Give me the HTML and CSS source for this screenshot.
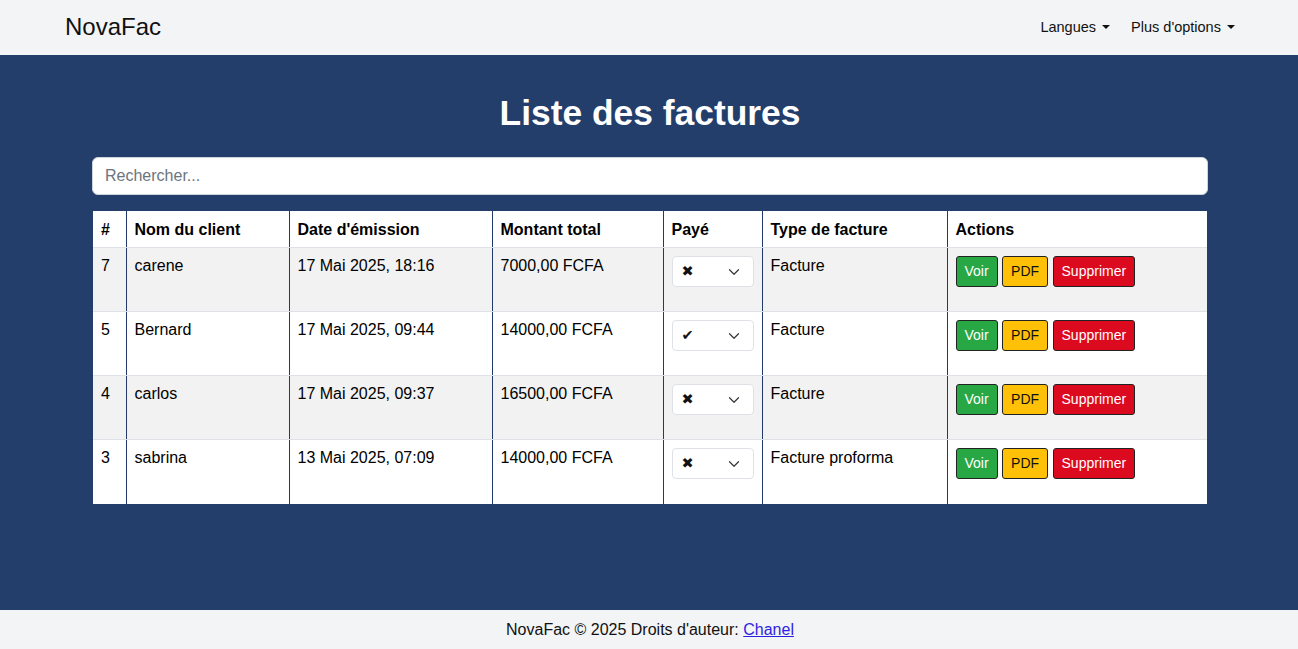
FILE: index.html
```html
<!DOCTYPE html>
<html lang="fr">
<head>
<meta charset="utf-8">
<title>NovaFac - Liste des factures</title>
<link rel="stylesheet" href="styles.css">
</head>
<body>
<nav class="navbar">
  <div class="nav-inner">
    <a class="brand" href="#">NovaFac</a>
    <ul class="nav-links">
      <li><a class="nav-link dropdown-toggle" href="#">Langues</a></li>
      <li><a class="nav-link dropdown-toggle" href="#">Plus d'options</a></li>
    </ul>
  </div>
</nav>
<main class="main">
  <div class="container">
    <h1 class="title">Liste des factures</h1>
    <input class="search" type="text" placeholder="Rechercher...">
    <table class="invoices">
      <colgroup>
        <col class="c-num"><col class="c-name"><col class="c-date"><col class="c-amount"><col class="c-paid"><col class="c-type"><col class="c-actions">
      </colgroup>
      <thead>
        <tr><th>#</th><th>Nom du client</th><th>Date d'émission</th><th>Montant total</th><th>Payé</th><th>Type de facture</th><th>Actions</th></tr>
      </thead>
      <tbody>
        <tr class="odd">
          <td>7</td><td>carene</td><td>17 Mai 2025, 18:16</td><td>7000,00 FCFA</td>
          <td><div class="fselect"><span class="mark">✖</span><svg class="chev" viewBox="0 0 16 16" width="16" height="12"><path d="m2 5 6 6 6-6" fill="none" stroke="#343a40" stroke-linecap="round" stroke-linejoin="round" stroke-width="1.6"/></svg></div></td>
          <td>Facture</td>
          <td class="actions"><a class="btn btn-green" href="#">Voir</a> <a class="btn btn-yellow" href="#">PDF</a> <a class="btn btn-red" href="#">Supprimer</a></td>
        </tr>
        <tr>
          <td>5</td><td>Bernard</td><td>17 Mai 2025, 09:44</td><td>14000,00 FCFA</td>
          <td><div class="fselect"><span class="mark">✔</span><svg class="chev" viewBox="0 0 16 16" width="16" height="12"><path d="m2 5 6 6 6-6" fill="none" stroke="#343a40" stroke-linecap="round" stroke-linejoin="round" stroke-width="1.6"/></svg></div></td>
          <td>Facture</td>
          <td class="actions"><a class="btn btn-green" href="#">Voir</a> <a class="btn btn-yellow" href="#">PDF</a> <a class="btn btn-red" href="#">Supprimer</a></td>
        </tr>
        <tr class="odd">
          <td>4</td><td>carlos</td><td>17 Mai 2025, 09:37</td><td>16500,00 FCFA</td>
          <td><div class="fselect"><span class="mark">✖</span><svg class="chev" viewBox="0 0 16 16" width="16" height="12"><path d="m2 5 6 6 6-6" fill="none" stroke="#343a40" stroke-linecap="round" stroke-linejoin="round" stroke-width="1.6"/></svg></div></td>
          <td>Facture</td>
          <td class="actions"><a class="btn btn-green" href="#">Voir</a> <a class="btn btn-yellow" href="#">PDF</a> <a class="btn btn-red" href="#">Supprimer</a></td>
        </tr>
        <tr>
          <td>3</td><td>sabrina</td><td>13 Mai 2025, 07:09</td><td>14000,00 FCFA</td>
          <td><div class="fselect"><span class="mark">✖</span><svg class="chev" viewBox="0 0 16 16" width="16" height="12"><path d="m2 5 6 6 6-6" fill="none" stroke="#343a40" stroke-linecap="round" stroke-linejoin="round" stroke-width="1.6"/></svg></div></td>
          <td>Facture proforma</td>
          <td class="actions"><a class="btn btn-green" href="#">Voir</a> <a class="btn btn-yellow" href="#">PDF</a> <a class="btn btn-red" href="#">Supprimer</a></td>
        </tr>
      </tbody>
    </table>
  </div>
</main>
<footer class="footer">
  NovaFac © 2025 Droits d'auteur: <a class="footer-link" href="#">Chanel</a>
</footer>
</body>
</html>
```

FILE: styles.css
```css
* { box-sizing: border-box; }

body {
  margin: 0;
  font-family: "Liberation Sans", Arial, sans-serif;
  font-size: 16px;
  line-height: 1.5;
  color: #212529;
  background: #243e6c;
}

.navbar {
  height: 55px;
  background: #f3f4f6;
}

.nav-inner {
  width: 1200px;
  margin: 0 auto;
  padding: 0 14px 0 16px;
  height: 100%;
  display: flex;
  align-items: center;
  justify-content: space-between;
}

.brand {
  font-size: 24px;
  color: #111;
  text-decoration: none;
  line-height: 1;
  margin-top: -1px;
}

.nav-links {
  list-style: none;
  margin: 0;
  padding: 0;
  display: flex;
}

.nav-link {
  display: block;
  padding: 8px 10px;
  font-size: 14.5px;
  color: #111;
  text-decoration: none;
}

.nav-links li:first-child .nav-link { padding-right: 11px; }
.nav-links li:last-child .nav-link { padding-right: 0; }

.dropdown-toggle::after {
  content: "";
  display: inline-block;
  margin-left: 0.42em;
  vertical-align: 0.2em;
  border-top: 0.3em solid #111;
  border-left: 0.3em solid transparent;
  border-right: 0.3em solid transparent;
}

.main {
  height: 555px;
  padding-left: 2px;
  background: #243e6c;
}

.container {
  width: 1116px;
  margin: 0 auto;
  padding-top: 37px;
}

.title {
  margin: 0 0 23px;
  text-align: center;
  color: #fff;
  font-size: 35.4px;
  line-height: 42px;
  font-weight: 700;
}

.search {
  display: block;
  width: 100%;
  height: 38px;
  padding: 6px 12px;
  font-family: inherit;
  font-size: 16px;
  color: #212529;
  background: #fff;
  border: 1px solid #ced4da;
  border-radius: 6px;
  outline: none;
}

.search::placeholder { color: #6c757d; }

.invoices {
  margin: 16px 0 0 1px;
  width: 1114px;
  table-layout: fixed;
  border-collapse: collapse;
  background: #fff;
  color: #000;
}

.c-num { width: 33px; }
.c-name { width: 163px; }
.c-date { width: 203px; }
.c-amount { width: 171px; }
.c-paid { width: 99px; }
.c-type { width: 185px; }
.c-actions { width: 260px; }

.invoices th,
.invoices td {
  text-align: left;
  vertical-align: top;
  padding: 6px 8px;
  border-left: 1px solid #22396a;
  border-bottom: 1px solid #dee2e6;
}

.invoices th:first-child,
.invoices td:first-child { border-left: none; }

.invoices th {
  font-weight: 700;
  height: 36px;
  padding-top: 7px;
  padding-bottom: 5px;
}

.invoices tbody tr { height: 64px; }
.invoices tbody tr:last-child td { border-bottom: none; }
.invoices tr.odd td { background: #f2f2f2; }

.fselect {
  margin-top: 2px;
  width: 82px;
  height: 31px;
  border: 1px solid #dee2e6;
  border-radius: 4px;
  background: #fff;
  display: flex;
  align-items: center;
  justify-content: space-between;
  padding: 0 11px 0 9px;
}

.mark {
  font-family: "DejaVu Sans", sans-serif;
  font-size: 14.5px;
  line-height: 1;
  color: #111;
}

.chev { display: block; }

.actions { white-space: nowrap; }

.btn {
  display: inline-block;
  margin-top: 2px;
  height: 31px;
  padding: 0 8px;
  font-size: 14px;
  line-height: 29px;
  border: 1px solid #222;
  border-radius: 3px;
  text-decoration: none;
  vertical-align: top;
}

.btn-green { background: #28a745; color: #fff; }
.btn-yellow { background: #ffc107; color: #111; }
.btn-red { background: #dc0a1f; color: #fff; }

.footer {
  height: 39px;
  background: #f3f4f6;
  text-align: center;
  font-size: 16px;
  line-height: 39px;
  color: #111;
  padding-left: 2px;
}

.footer-link { color: #2d1fe0; }
```
